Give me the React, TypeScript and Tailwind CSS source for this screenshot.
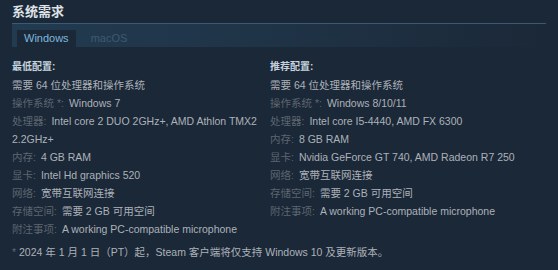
const minimum = [
  { label: '操作系统 *:', value: 'Windows 7' },
  { label: '处理器:', value: 'Intel core 2 DUO 2GHz+, AMD Athlon TMX2 2.2GHz+' },
  { label: '内存:', value: '4 GB RAM' },
  { label: '显卡:', value: 'Intel Hd graphics 520' },
  { label: '网络:', value: '宽带互联网连接' },
  { label: '存储空间:', value: '需要 2 GB 可用空间' },
  { label: '附注事项:', value: 'A working PC-compatible microphone' },
];

const recommended = [
  { label: '操作系统 *:', value: 'Windows 8/10/11' },
  { label: '处理器:', value: 'Intel core I5-4440, AMD FX 6300' },
  { label: '内存:', value: '8 GB RAM' },
  { label: '显卡:', value: 'Nvidia GeForce GT 740, AMD Radeon R7 250' },
  { label: '网络:', value: '宽带互联网连接' },
  { label: '存储空间:', value: '需要 2 GB 可用空间' },
  { label: '附注事项:', value: 'A working PC-compatible microphone' },
];

function Column({ title, rows }: { title: string; rows: { label: string; value: string }[] }) {
  return (
    <div className="w-[250px]">
      <p className="text-[10px] font-bold text-[#c6d4df] leading-[14px] mb-[2px]">{title}</p>
      <ul className="text-[10.5px] leading-[18px] text-[#acb2b8]">
        <li>需要 64 位处理器和操作系统</li>
        {rows.map((row, i) => (
          <li key={i}>
            <span className="text-[#5c6670] mr-[5px]">{row.label}</span>
            {row.value}
          </li>
        ))}
      </ul>
    </div>
  );
}

export default function App() {
  return (
    <div
      className="w-[558px] h-[270px] bg-[#1b2838] px-[12px] pt-[3px] overflow-hidden"
      style={{ fontFamily: '"Liberation Sans", "Noto Sans CJK SC", Arial, sans-serif' }}
    >
      <h2 className="text-[13px] font-bold text-[#dfe3e6] leading-[18px]">系统需求</h2>
      <div className="mt-[2px] h-[24px] border-t border-[#3a5a74] bg-gradient-to-r from-[#223b50] via-[#1f3346] to-[#1b2838] flex items-end pl-[5px] gap-[15px]">
        <div className="h-[17px] px-[7px] bg-[#1b2838] text-[11px] leading-[17px] text-[#7cb8de]">Windows</div>
        <div className="h-[17px] text-[11px] leading-[17px] text-[#3f5a70]">macOS</div>
      </div>
      <div className="flex gap-[8px] mt-[13px]">
        <Column title="最低配置:" rows={minimum} />
        <Column title="推荐配置:" rows={recommended} />
      </div>
      <p className="mt-[5px] text-[10.5px] leading-[18px] text-[#acb2b8]">
        <span className="text-[#5c6670]">*</span> 2024 年 1 月 1 日（PT）起，Steam 客户端将仅支持 Windows 10 及更新版本。
      </p>
    </div>
  );
}
